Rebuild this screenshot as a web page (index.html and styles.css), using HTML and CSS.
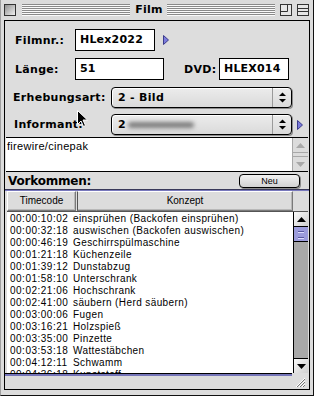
FILE: index.html
```html
<!DOCTYPE html>
<html lang="de">
<head>
    <meta charset="UTF-8">
    <title>Film</title>
    <link rel="stylesheet" href="styles.css">
</head>
<body>
    <div class="window">
        <!-- Titelleiste -->
        <div class="titlebar">
            <svg class="tbox close" width="12" height="12" viewBox="0 0 12 12">
                <defs>
                    <linearGradient id="cg" x1="0" y1="0" x2="1" y2="1">
                        <stop offset="0" stop-color="#8c8c8c"/>
                        <stop offset="1" stop-color="#f4f4f4"/>
                    </linearGradient>
                </defs>
                <rect x="0.5" y="0.5" width="11" height="11" fill="url(#cg)" stroke="#333"/>
            </svg>
            <span class="stripes"></span>
            <span class="title">Film</span>
            <span class="stripes"></span>
            <svg class="tbox zoom" width="12" height="12" viewBox="0 0 12 12">
                <rect x="0.5" y="0.5" width="11" height="11" fill="#e6e6e6" stroke="#333"/>
                <path d="M0.5 7.5 H7.5 V0.5" fill="none" stroke="#333"/>
            </svg>
            <svg class="tbox collapse" width="12" height="12" viewBox="0 0 12 12">
                <rect x="0.5" y="0.5" width="11" height="11" fill="#e6e6e6" stroke="#333"/>
                <path d="M0.5 4.5 H11.5 M0.5 7.5 H11.5" fill="none" stroke="#333"/>
            </svg>
        </div>

        <div class="content">
            <!-- Kopfdaten -->
            <div class="row r1">
                <span class="label w-60">Filmnr.:</span>
                <div class="field w-film">HLex2022</div>
                <svg class="tri" width="6" height="10" viewBox="0 0 6 10"><polygon points="0.5,0.5 5.5,5 0.5,9.5" fill="#7b7bdc" stroke="#3c3c8c"/></svg>
            </div>
            <div class="row r2">
                <span class="label w-60">Länge:</span>
                <div class="field w-laenge">51</div>
                <span class="label dvd">DVD:</span>
                <div class="field w-dvd">HLEX014</div>
            </div>
            <div class="row r3">
                <span class="label w-erh">Erhebungsart:</span>
                <div class="popup">
                    <span class="popup-text">2 - Bild</span>
                    <span class="popup-arrows">
                        <svg width="7" height="11" viewBox="0 0 7 11"><polygon points="0,4 3.5,0.5 7,4" fill="#000"/><polygon points="0,7 3.5,10.5 7,7" fill="#000"/></svg>
                    </span>
                </div>
            </div>
            <div class="row r4">
                <span class="label w-inf">Informant:</span>
                <div class="popup">
                    <span class="popup-text">2<span class="blur"></span></span>
                    <span class="popup-arrows">
                        <svg width="7" height="11" viewBox="0 0 7 11"><polygon points="0,4 3.5,0.5 7,4" fill="#000"/><polygon points="0,7 3.5,10.5 7,7" fill="#000"/></svg>
                    </span>
                </div>
                <svg class="tri tri-inf" width="6" height="10" viewBox="0 0 6 10"><polygon points="0.5,0.5 5.5,5 0.5,9.5" fill="#7b7bdc" stroke="#3c3c8c"/></svg>
            </div>

            <!-- Notizfeld -->
            <div class="notes">
                <div class="notes-text">firewire/cinepak</div>
                <div class="vscroll inactive">
                    <span class="arrow-box up"><svg width="9" height="5" viewBox="0 0 9 5"><polygon points="0,5 4.5,0 9,5" fill="#a8a8a8"/></svg></span>
                    <span class="track"></span>
                    <span class="arrow-box down"><svg width="9" height="5" viewBox="0 0 9 5"><polygon points="0,0 4.5,5 9,0" fill="#a8a8a8"/></svg></span>
                </div>
            </div>

            <div class="section-head">
                <span class="section-title">Vorkommen:</span>
                <button class="btn">Neu</button>
            </div>
            <div class="divider"></div>

            <!-- Tabelle -->
            <div class="table-head">
                <span class="th th-time">Timecode</span>
                <span class="th th-konzept">Konzept</span>
            </div>
            <div class="list">
                <div class="list-body">
                    <div class="item"><span class="tc">00:00:10:02</span>einsprühen (Backofen einsprühen)</div>
                    <div class="item"><span class="tc">00:00:32:18</span>auswischen (Backofen auswischen)</div>
                    <div class="item"><span class="tc">00:00:46:19</span>Geschirrspülmaschine</div>
                    <div class="item"><span class="tc">00:01:21:18</span>Küchenzeile</div>
                    <div class="item"><span class="tc">00:01:39:12</span>Dunstabzug</div>
                    <div class="item"><span class="tc">00:01:58:10</span>Unterschrank</div>
                    <div class="item"><span class="tc">00:02:21:06</span>Hochschrank</div>
                    <div class="item"><span class="tc">00:02:41:00</span>säubern (Herd säubern)</div>
                    <div class="item"><span class="tc">00:03:00:06</span>Fugen</div>
                    <div class="item"><span class="tc">00:03:16:21</span>Holzspieß</div>
                    <div class="item"><span class="tc">00:03:35:00</span>Pinzette</div>
                    <div class="item"><span class="tc">00:03:53:18</span>Wattestäbchen</div>
                    <div class="item"><span class="tc">00:04:12:11</span>Schwamm</div>
                    <div class="item"><span class="tc">00:04:36:18</span>Kunststoff</div>
                </div>
                <div class="vscroll active">
                    <span class="arrow-box up"><svg width="9" height="5" viewBox="0 0 9 5"><polygon points="0,5 4.5,0 9,5" fill="#000"/></svg></span>
                    <span class="thumb"></span>
                    <span class="track"></span>
                    <span class="arrow-box down"><svg width="9" height="5" viewBox="0 0 9 5"><polygon points="0,0 4.5,5 9,0" fill="#000"/></svg></span>
                </div>
            </div>
            <div class="bottom">
                <span class="hbar"></span>
                <span class="grip">
                    <svg width="11" height="11" viewBox="0 0 11 11">
                        <path d="M1 10 L10 1 M4 10 L10 4 M7 10 L10 7" stroke="#fff" stroke-width="1"/>
                        <path d="M2 10 L10 2 M5 10 L10 5 M8 10 L10 8" stroke="#777" stroke-width="1"/>
                    </svg>
                </span>
            </div>
        </div>

        <!-- Mauszeiger -->
        <svg class="cursor" width="12" height="18" viewBox="0 0 12 18">
            <polygon points="0.5,0.5 0.5,14.5 4,11 6.5,16.5 8.5,15.5 6,10 10.5,10" fill="#000" stroke="#fff" stroke-width="1"/>
        </svg>
    </div>
</body>
</html>
```

FILE: styles.css
```css
body {
    margin: 0;
    background: #dcdcdc;
}

.window {
    position: relative;
    width: 314px;
    height: 396px;
    box-sizing: border-box;
    background: #dcdcdc;
    border-left: 1px solid #a0a0a0;
    border-right: 1px solid #111;
    border-bottom: 1px solid #111;
    padding: 0 3px 5px 3px;
    display: flex;
    flex-direction: column;
    font-family: "DejaVu Sans", sans-serif;
}

/* Titelleiste */

.titlebar {
    height: 20px;
    display: flex;
    align-items: center;
    flex-shrink: 0;
}

.tbox {
    flex-shrink: 0;
    display: block;
}

.close {
    margin-right: 6px;
}

.zoom {
    margin-left: 5px;
}

.collapse {
    margin-left: 5px;
    margin-right: 1px;
}

.stripes {
    flex: 1;
    height: 12px;
    background: repeating-linear-gradient(to bottom, #8a8a8a 0, #8a8a8a 1px, #fafafa 1px, #fafafa 2px);
}

.title {
    padding: 0 4px 0 5px;
    font-weight: bold;
    font-size: 11px;
    letter-spacing: 0.3px;
    line-height: 20px;
}

/* Inhalt */

.content {
    flex: 1;
    border: 1px solid #000;
    display: flex;
    flex-direction: column;
    background: #dddddd;
    min-height: 0;
}

.row {
    display: flex;
    align-items: center;
    padding-left: 10px;
    flex-shrink: 0;
}

.r1 {
    margin-top: 8px;
    height: 22px;
}

.r2 {
    margin-top: 7px;
    height: 22px;
}

.r3 {
    margin-top: 7px;
    height: 21px;
    padding-left: 8px;
}

.r4 {
    margin-top: 6px;
    height: 21px;
    padding-left: 9px;
}

.label {
    font-weight: bold;
    font-size: 11px;
    letter-spacing: 0.3px;
    color: #000;
}

.w-60 {
    width: 60px;
}

.w-erh {
    width: 98px;
}

.w-inf {
    width: 97px;
}

.dvd {
    margin-left: 20px;
    width: 35px;
}

.field {
    height: 22px;
    box-sizing: border-box;
    border: 1px solid #000;
    background: #fff;
    padding-left: 4px;
    font-weight: bold;
    font-size: 11px;
    letter-spacing: 0.2px;
    line-height: 20px;
}

.w-film {
    width: 80px;
}

.w-laenge {
    width: 89px;
}

.w-dvd {
    width: 70px;
}

.tri {
    margin-left: 8px;
    display: block;
}

.tri-inf {
    margin-left: 5px;
}

.popup {
    width: 181px;
    height: 21px;
    box-sizing: border-box;
    border: 1px solid #000;
    border-radius: 4px;
    background: linear-gradient(#ececec, #dadada);
    box-shadow: 1px 1px 0 #8c8c8c, inset 1px 1px 0 #fff;
    display: flex;
}

.popup-text {
    flex: 1;
    padding-left: 6px;
    font-weight: bold;
    font-size: 11px;
    letter-spacing: 0.3px;
    line-height: 19px;
    display: flex;
    align-items: center;
}

.blur {
    display: inline-block;
    width: 66px;
    height: 6px;
    margin-left: 2px;
    border-radius: 3px;
    background: #7d7d7d;
    filter: blur(2px);
}

.popup-arrows {
    width: 18px;
    border-left: 1px solid #9a9a9a;
    display: flex;
    align-items: center;
    justify-content: center;
}

.popup-arrows svg {
    display: block;
}

/* Notizfeld */

.notes {
    margin: 2px 1px 0 1px;
    height: 35px;
    box-sizing: border-box;
    border-top: 1px solid #000;
    border-bottom: 1px solid #000;
    display: flex;
    flex-shrink: 0;
}

.notes-text {
    flex: 1;
    background: #fff;
    padding: 2px 1px;
    font-family: "Liberation Sans", sans-serif;
    font-size: 11px;
    letter-spacing: 0.3px;
    line-height: 13px;
}

.vscroll {
    width: 16px;
    box-sizing: border-box;
    border-left: 1px solid #000;
    display: flex;
    flex-direction: column;
    background: #dcdcdc;
}

.vscroll.inactive {
    border-left-color: #a8a8a8;
}

.arrow-box {
    height: 14px;
    display: flex;
    align-items: center;
    justify-content: center;
    flex-shrink: 0;
}

.arrow-box svg {
    display: block;
}

.inactive .up {
    border-bottom: 1px solid #a8a8a8;
}

.inactive .down {
    border-top: 1px solid #a8a8a8;
}

.track {
    flex: 1;
}

.active {
    width: 15px;
}

.active .arrow-box {
    background: linear-gradient(135deg, #fafafa, #cfcfcf);
}

.active .up {
    border-bottom: 1px solid #000;
}

.active .down {
    border-top: 1px solid #000;
}

.active .track {
    background: #a9a9a9;
}

.thumb {
    height: 15px;
    flex-shrink: 0;
    box-sizing: border-box;
    border-bottom: 1px solid #000;
    background:
        repeating-linear-gradient(to bottom, transparent 0, transparent 4px, #5858a0 4px, #5858a0 5px, #ddddff 5px, #ddddff 6px) 4px 0 / 6px 12px no-repeat,
        #9c9cdc;
}

.section-head {
    height: 17px;
    display: flex;
    align-items: center;
    padding-left: 3px;
    flex-shrink: 0;
}

.section-title {
    font-weight: bold;
    font-size: 12px;
    letter-spacing: -0.2px;
}

.btn {
    margin-left: auto;
    margin-right: 9px;
    width: 61px;
    height: 14px;
    padding: 0;
    border: 1px solid #000;
    border-radius: 4px;
    background: linear-gradient(#f2f2f2, #d2d2d2);
    box-shadow: 1px 1px 0 #8c8c8c;
    font-family: "Liberation Sans", sans-serif;
    font-size: 9px;
    line-height: 12px;
    color: #000;
}

.divider {
    height: 2px;
    flex-shrink: 0;
    background: linear-gradient(#3a3a5a 0, #3a3a5a 1px, #7878bc 1px);
}

/* Tabelle */

.table-head {
    height: 20px;
    display: flex;
    padding-left: 2px;
    flex-shrink: 0;
}

.th {
    box-sizing: border-box;
    border: 1px solid #7a7a7a;
    border-top-color: #fff;
    border-left-color: #fff;
    background: #dcdcdc;
    box-shadow: inset -1px -1px 0 #b8b8b8;
    font-family: "Liberation Sans", sans-serif;
    font-size: 10px;
    text-align: center;
    line-height: 18px;
}

.th-time {
    width: 69px;
}

.th-konzept {
    width: 216px;
    margin-left: 1px;
    border-left: 1px solid #555;
}

.list {
    height: 162px;
    display: flex;
    margin: 0 1px 0 2px;
    flex-shrink: 0;
    border-top: 1px solid #555;
    box-sizing: border-box;
}

.list-body {
    flex: 1;
    background: #fff;
    overflow: hidden;
    padding: 1px 0 0 3px;
    font-family: "Liberation Sans", sans-serif;
    font-size: 10px;
    letter-spacing: 0.4px;
}

.item {
    height: 12px;
    line-height: 12px;
    white-space: nowrap;
}

.tc {
    display: inline-block;
    width: 63px;
    letter-spacing: 0.5px;
}

.bottom {
    flex: 1;
    display: flex;
}

.hbar {
    flex: 1;
    border-top: 1px solid #000;
    background: linear-gradient(#7474b8 0, #7474b8 2px, #dcdcdc 2px);
}

.grip {
    width: 16px;
    margin-right: 1px;
    display: flex;
    align-items: flex-end;
    justify-content: center;
    padding-bottom: 1px;
}

.cursor {
    position: absolute;
    left: 76px;
    top: 110px;
}
```
